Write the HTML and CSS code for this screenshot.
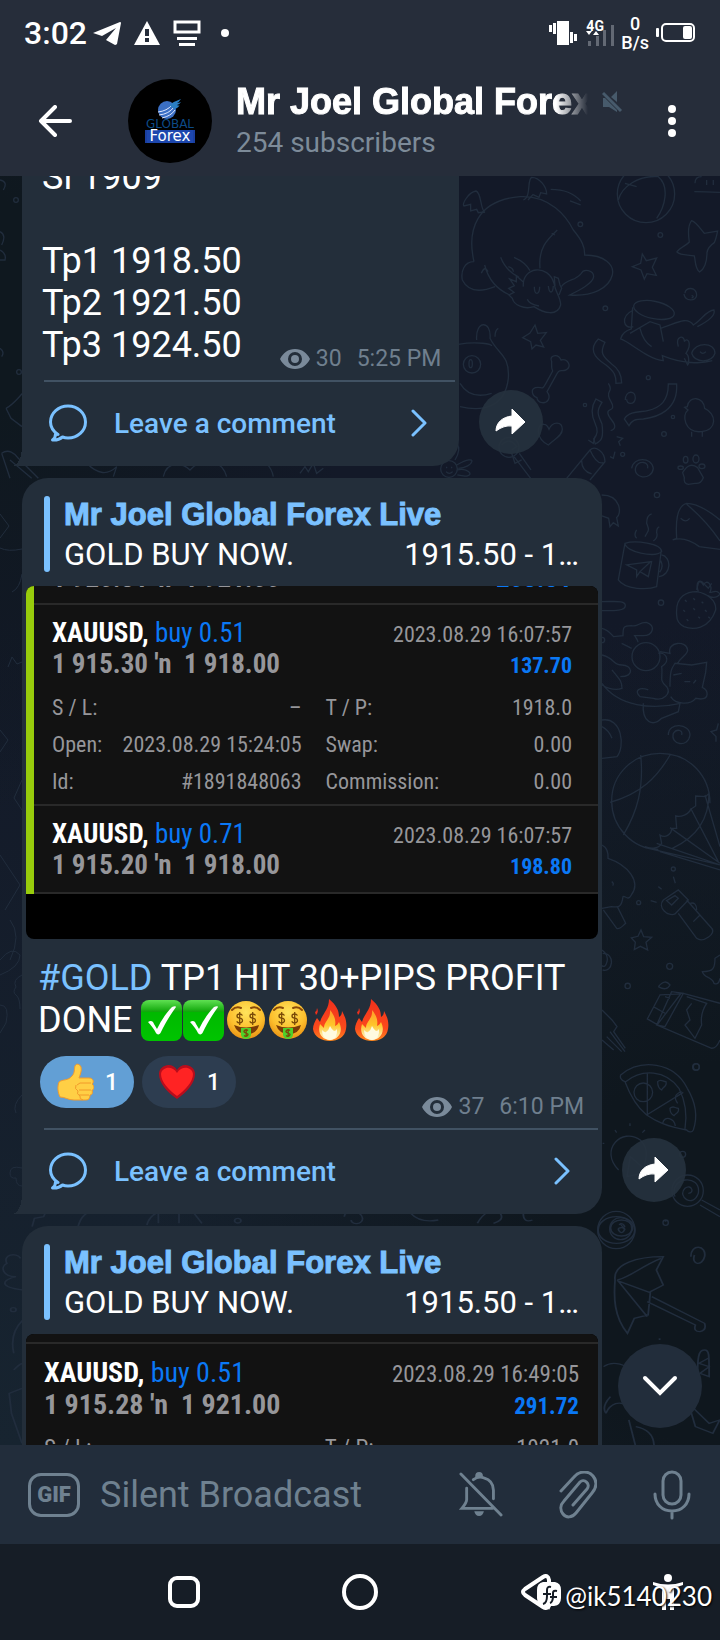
FILE: index.html
```
<!DOCTYPE html>
<html lang="en">
<head>
    <meta charset="UTF-8">
    <meta name="viewport" content="width=device-width, initial-scale=1.0">
    <title>Mr Joel Global Forex Live</title>
    <link rel="stylesheet" href="styles.css">
</head>
<body>
    <!-- Shared icons -->
    <svg class="sprite" width="0" height="0" aria-hidden="true">
        <defs>
            <linearGradient id="green" x1="0" y1="0" x2="0" y2="1">
                <stop offset="0" stop-color="#5fe052"/>
                <stop offset=".28" stop-color="#12a80c"/>
                <stop offset=".3" stop-color="#00b900"/>
                <stop offset="1" stop-color="#00c400"/>
            </linearGradient>
            <radialGradient id="gold" cx=".5" cy=".3" r=".75">
                <stop offset="0" stop-color="#ffe45c"/>
                <stop offset=".6" stop-color="#fdbf2d"/>
                <stop offset="1" stop-color="#e58a10"/>
            </radialGradient>
            <linearGradient id="flame" x1="0" y1="0" x2="0" y2="1">
                <stop offset="0" stop-color="#f0301c"/>
                <stop offset=".7" stop-color="#fb4a1c"/>
                <stop offset="1" stop-color="#ff8a1e"/>
            </linearGradient>
            <linearGradient id="flame-core" x1="0" y1="0" x2="0" y2="1">
                <stop offset="0" stop-color="#ff9a2a"/>
                <stop offset=".5" stop-color="#ffc52a"/>
                <stop offset="1" stop-color="#fffbd8"/>
            </linearGradient>
            <symbol id="check" viewBox="0 0 42 42">
                <rect x="0" y="1" width="41" height="41" rx="8" fill="url(#green)"/>
                <path d="M7 23c3-2 5-1 6 2l3 5C20 22 25 14 31 8c2-1 4-1 4 0-6 8-11 17-15 25-1 3-4 3-5 1-2-4-5-8-8-11z" fill="#fff"/>
            </symbol>
            <symbol id="money" viewBox="0 0 42 42">
                <circle cx="21" cy="21" r="19" fill="url(#gold)"/>
                <path d="M7 11q4-4 9-2M26 9q5-2 9 2" fill="none" stroke="#8a4b0a" stroke-width="2" stroke-linecap="round"/>
                <path d="M9 26q12 5 25 0-2 9-12 9T9 26z" fill="#7a3b06"/>
                <path d="M16 29h10v7q-1 4-5 4t-5-4z" fill="#4fd02a"/>
                <path d="M17.500 16.500q-1-1.500-3-1.500-2.500 0-2.500 2t2.700 2.200q2.800.4 2.800 2.400T14.700 24q-2 0-3-1.700M14.700 13v13M30.500 16.500q-1-1.500-3-1.500-2.500 0-2.500 2t2.700 2.200q2.800.4 2.800 2.400T27.700 24q-2 0-3-1.700M27.700 13v13M23 31.500q-2-1.500-3.500 0t1.500 2.500 1.500 2.500-3.500 0M21.200 30v8" fill="none" stroke="#7a4a08" stroke-width="1.300"/>
            </symbol>
            <symbol id="fire" viewBox="0 0 42 42">
                <path d="M20 0c7 6 10 11 10 18 2-1 3-3 3-6 4 7 5 12 4 18-1 8-8 12-16 12S5 38 4 30c0-4 2-8 4-11l3 4c2-8 9-12 9-23z" fill="url(#flame)"/>
                <path d="M6 13q2-1 2-4 2 4-1 7z" fill="#f0301c"/>
                <path d="M21 11c5 6 6 11 5 16 2-1 3-2 4-4 5 10-1 18-9 18S8 34 11 25l4 4c0-7 7-9 6-18z" fill="url(#flame-core)"/>
                <path d="M21 27q2 4 4 5 2 0 3-2 1 10-7 11-8-1-8-10 3 3 4 2 3-2 4-6z" fill="#fffbe0"/>
            </symbol>
            <symbol id="eye" viewBox="0 0 30 20">
                <path d="M15 0C8 0 3 4 0 10c3 6 8 10 15 10s12-4 15-10C27 4 22 0 15 0zm0 17a7 7 0 1 1 0-14 7 7 0 0 1 0 14z" fill="#7a8a9a"/>
                <circle cx="15" cy="10" r="4" fill="#7a8a9a"/>
            </symbol>
            <symbol id="bubble" viewBox="0 0 38 38">
                <path d="M9 30.500C4.500 27.500 1.500 23 1.500 18 1.500 9 9.500 2 19 2s17.500 7 17.500 16S28.500 34 19 34q-3 0-5.500-1Q9.500 36.500 3.500 36 7 33.500 6.500 28.500" fill="none" stroke="#7ac1ff" stroke-width="3" stroke-linejoin="round" stroke-linecap="round"/>
            </symbol>
            <symbol id="chevron" viewBox="0 0 16 28">
                <path d="M2 2l12 12L2 26" fill="none" stroke="#7ac1ff" stroke-width="3" stroke-linecap="round" stroke-linejoin="round"/>
            </symbol>
            <symbol id="share" viewBox="0 0 32 26">
                <path d="M17 0v7C7 8 1 14 1 22q8-6 16-5v8l13-12z" fill="#fff" stroke="#fff" stroke-linejoin="round"/>
            </symbol>
        </defs>
    </svg>

    <header class="top">
        <div class="status">
            <span class="clock">3:02</span>
            <svg width="28" height="24" viewBox="0 0 28 24"><path d="M0 12L27 1q1 0 1 1l-4 21q-1 1-2 1l-9-5 10-12L9 15z" fill="#fff"/></svg>
            <svg width="26" height="24" viewBox="0 0 26 24"><path d="M13 0l13 24H0z" fill="#fff"/><path d="M11 8h4v7h-4zM11 17h4v4h-4z" fill="#262d3a"/></svg>
            <svg width="28" height="26" viewBox="0 0 28 26"><path d="M2 2h24v10H2z" fill="none" stroke="#fff" stroke-width="3"/><path d="M4 17h20v3H4zM6 23h16v3H6z" fill="#fff"/></svg>
            <svg class="dot" width="8" height="8" viewBox="0 0 8 8"><circle cx="4" cy="4" r="4" fill="#fff"/></svg>
            <span class="spacer"></span>
            <svg width="28" height="24" viewBox="0 0 28 24"><path d="M8 0h12v24H8zM0 4h3v7H0zM4 2h3v11H4zM21 11h3v11h-3zM25 13h3v7h-3z" fill="#fff"/></svg>
            <div class="signal">
                <span class="net">4G</span>
                <svg width="28" height="28" viewBox="0 0 28 28"><path d="M2 22h3v5H2zM10 17h3v10h-3zM17 11h3v16h-3zM25 6h3v21h-3z" fill="#636974"/><path d="M0 12h6l-3 4zM7 16h6l-3-4z" fill="#fff"/></svg>
            </div>
            <div class="speed"><span>0</span><span>B/s</span></div>
            <svg width="40" height="20" viewBox="0 0 40 20"><rect x="6" y="1" width="32" height="17" rx="4" fill="none" stroke="#fff" stroke-width="2"/><rect x="27" y="3" width="9" height="13" rx="2" fill="#fff"/><rect x="0" y="5" width="3" height="9" rx="1" fill="#fff"/></svg>
        </div>
        <div class="channel">
            <button class="back" aria-label="Back">
                <svg width="34" height="32" viewBox="0 0 34 32"><path d="M17 2L3 16l14 14M3 16h29" fill="none" stroke="#fff" stroke-width="4" stroke-linecap="round" stroke-linejoin="round"/></svg>
            </button>
            <div class="avatar">
                <svg class="globe" width="26" height="20" viewBox="0 0 26 20"><circle cx="10" cy="11" r="9" fill="#3b6fc4"/><path d="M1 13q9-1 14-7M2 16q10-1 15-8M5 19q9-2 13-8" fill="none" stroke="#dfe8ff"/><path d="M12 6q6-4 12-6-2 3-4 4 2 0 4-1-2 3-4 3 2 1 3 0-3 4-6 4z" fill="#2b7fc4"/></svg>
                <span class="avatar-global">GLOBAL</span>
                <span class="avatar-forex">Forex</span>
            </div>
            <div class="info">
                <div class="name-row">
                    <h1>Mr Joel Global Forex Live</h1>
                    <svg width="22" height="24" viewBox="0 0 22 24"><path d="M9 7l6-6v11zM1 8h2l12 12v2L7 17H1z" fill="#475a6b"/><path d="M1 3l18 18" stroke="#475a6b" stroke-width="3"/></svg>
                </div>
                <p>254 subscribers</p>
            </div>
            <button class="menu" aria-label="More options">
                <svg width="8" height="34" viewBox="0 0 8 34"><g fill="#fff"><circle cx="4" cy="5" r="4"/><circle cx="4" cy="17" r="4"/><circle cx="4" cy="29" r="4"/></g></svg>
            </button>
        </div>
    </header>

    <main class="chat">
        <!-- Wallpaper doodles -->
        <svg class="doodles" width="720" height="1269" viewBox="0 176 720 1269" aria-hidden="true">
            <g transform="translate(440 170) scale(.3333)">
                <path d="M102 275C80 180 110 90 240 80c90-5 140 60 160 100 25 30 35 50 34 75 60 0 90 30 83 60-10 40-60 65-128 60 30-15 70-35 72-55 0-20-30-25-37-10-20 25-40 15-60 40M102 275c-30 0-40 30-35 55 20 40 60 35 98 20M134 285c10 40 30 70 75 90M300 295c-5-60 20-85 52-115M335 190l10 5M182 262q15 40 55 60M222 262q35 15 48 40M124 310q10-25 20-5M205 290q15 5 15 15"/>
                <path d="M250 350c-5-60 75-70 92-10 5 30 20 40 20 65-10 35-50 25-80 5-30 10-60-5-65-25l-10-10 15-8-16-12 17-8-14-20 20 8v-18l20 18M345 350l-2-30 12 5 5 20 5 10-8 20M283 350q0 20 8 20 8-2 8-20M325 348q2 18 8 18t7-18M262 388q5 15 35 20"/>
                <path d="M135 128c-15-10-10-60-27-65-25 5-42 40-36 45l20-5v20l18-5 5 10 18-2M250 90c25-10 10-60 25-68 25 0 45 30 45 50l-18-4-5 14-18-8-15 16M332 58q60 0 90 35M390 93l32 12"/>
                <circle cx="618" cy="72" r="86"/><path d="M535 90c10-40 60-75 120-70 35 30 20 90-5 125M555 40l35 10"/>
                <path d="M755 152c15 5 30 30 38 38l40-7c-5 25-5 25-10 35-15 10-20 18-22 30 0 30-10 50-22 58-15-10-12-35-16-48-15-5-40 0-52-12 10-15 30-20 37-30-3-20-5-50 7-64z"/><path d="M765 40q0-20 20-20M763 65q30 0 77 2M800 30v15M820 30v15"/>
                <path d="M607 252l12 20 31-8-13 28 12 24-28-5-8 16-10-27-26-10 25-10zM285 465l8 25 26-2-18 23 10 20-23-6-12 12-4-22-24-12 22-14z"/>
                <path d="M735 370c0-20 35-20 35 5 0 20-35 20-38-3M556 690c0-30 32-30 30-5-3 20-26 20-26 3M575 895c5-35 60-35 65 0-5 40-65 30-52-5 10-20 40-15 35 5M755 376q10 5 0 8"/>
                <ellipse cx="642" cy="420" rx="62" ry="26" transform="rotate(12 642 420)"/><path d="M580 420c-40 20-30 60 0 50M578 412l-4 65c-30 10-30 25-32 30 30 10 80 60 128 65l-3-15c60 25 120 25 150 15M570 490l60-35 30 10 10 50M600 475q10 40 35 55M660 475c40-10 80-40 100-10 25-15 40-45 62-45 5 15-10 30-50 50M715 530c-10-35 20-35 18-15 10-15 25 5 5 35 10 5 10 30 5 35l-10-20M755 550c10-35 70-35 70 0-10 30-60 30-70 0M780 545q8 10 18 0"/>
                <path d="M335 575c-10-20 20-25 28-5 20-5 35 20 15 30-20 5-20-5-32 20l-25 45c15 20 0 35-15 33-10 0-15-10-15-15-15-5-20-25-5-30 20-5 20 10 30-10l22-40c-5-10-3-20-3-28z"/>
                <path d="M475 507l20 10c-15 30-10 40 20 65q30 20 30 57l-17 1c0-25-5-35-30-55-40-25-50-50-23-78zM468 687l18 10c-20 30-10 40 0 65 5 40 0 50-20 60l-5-15c10-10 15-25 5-45q-20-40 2-75zM685 642h25c5 80-60 100-100 105-25 0-35 5-43 20l-14-20c15-25 50-20 70-25 40-10 62-30 62-80zM505 640q10 15 3 25t5 30-3 25 5 30-3 32"/>
                <path d="M325 825c-40-20-35-65-13-62 10 0 12 8 15 15 10-25 40-25 40 0 0 20-25 30-42 47zM55 523c60-10 100 0 100 5M110 510c-5-60 45-60 40-5 25 50 60 50 55 120-10 90-80 100-145 85M60 640q30 50 95 30M165 500q0-20 10-25"/>
                <circle cx="96" cy="583" r="26"/><ellipse cx="92" cy="581" rx="5" ry="12"/>
                <path d="M742 710c5-35 50-30 52 5 35 15 40 65-10 70-50 5-60-50-40-65l-10-8zM755 785v15M787 785v15M728 908q20-35 45-15l17 30q-8 20-25 17l-20 3q-15-2-12-20z"/><ellipse cx="768" cy="867" rx="9" ry="12"/><ellipse cx="737" cy="869" rx="7" ry="10"/><ellipse cx="786" cy="889" rx="9" ry="7"/><ellipse cx="722" cy="893" rx="8" ry="5"/>
                <path d="M380 925l70-85c15-15 45 5 45 35l-45 55M450 840q20 45 40 38M425 872q0 30 30 40M445 810l15 10 5-20M530 800l18 5-12 10 5 12M510 860l10 5 5-20"/><circle cx="207" cy="832" r="30"/><path d="M185 825q25-25 45 5l-15 10M222 860l50 65M238 850l35 50M215 850l10 30 20-10"/>
                <circle cx="27" cy="897" r="25"/><path d="M20 890v5M35 890v5M18 905q10 10 20 0M45 870c30-50-10-60 0-30M50 885c70-40 50 10 5 10M52 900c40-10 60 30 0 15"/>
                <path d="M485 975c60 0 60 60 45 68l5 25-15-10-10 12-4-25-20-7M555 1120l-20 110c20 30 90 30 115 20l14-110M555 1120c30-10 110 0 110 25-20 20-110 0-110-25zM665 1155c30 5 30 60-8 65M662 1172q10 20-3 35M560 1185l75-10-10 45-25-15-10 15v-20zM600 1205l30-28M590 1105q-10-10 0-25M615 1100c10-20 15-15 5-40 0-15 5-25 15-28M640 1113q15-10 10-25 0-15 8-17"/>
                <path d="M840 1050q-60-50-100-50c-40 10-30 90-30 105l-12 5c30-10 60 5 80 20l62 8M740 1003q60 50 100 110M722 1045q15 15 27 0M770 1260c5-20 5-30 15-25l20 20 10-15"/>
                <g><circle cx="421" cy="163" r="7"/><circle cx="661" cy="195" r="7"/><circle cx="496" cy="415" r="7"/><circle cx="625" cy="623" r="6"/><circle cx="435" cy="705" r="5"/><circle cx="699" cy="741" r="5"/><circle cx="672" cy="792" r="7"/><circle cx="548" cy="853" r="6"/><circle cx="651" cy="975" r="8"/></g>
            </g>
            <g transform="translate(590 560) scale(.3333)">
                <path d="M260 165c-5-60 35-70 60-70 30 5 60 25 57 55-20 60-70 60-95 50-20-10-22-25-22-35zM325 95c-10-30 5-40 15-20 10-20 30 0 20 22 10 0 20-10 30 5-10 15-30 10-35 5M285 120l5 5M310 115l5 5M335 125l5 5M280 150l5 5M310 145l5 5M345 150l5 5M290 178l5 5M325 170l5 5M355 170l5 5"/>
                <path d="M36 125c40 0 70-5 70 12s-40 15-70 15M36 205c20 5 30 20 35 25l28-3c0-25 0-30 25-30 20 5 20-10 45-10 30 10 20 40-10 40h-25q10 15 10 20M36 285c40 10 30 30 60 30 30 0 40 35-5 35M36 375q35 20 60 10c0-20-5-25-30-55M36 370c50 70 150 80 235 60M95 250l30 15"/><circle cx="168" cy="290" r="42"/><path d="M205 280c20-5 40 20 10 40 5 30-10 40 15 60 15 20-10 45-40 35l-40-5c-20-20 0-30 25-20M210 275l30 5c-10-35 50-40 53-10 0 15-20 20-30 40M240 380c0-50 5-55 15-70l50 5 45-8-3 30-10 45c20 10 20 35-5 35l-15-2c-15 20-60 20-75-5M160 430c-5 60 30 70 55 45l50-20 5-25M250 345l25-5M283 365h18M310 370l8-10"/>
                <path d="M235 525c0-40 65-35 65 0-5 40-60 30-50-5 10-15 30-10 25 5M36 480c60-10 70 80 45 110l-45 5M36 500q20 10 30 35M385 490l-5 20-17 5 15 15v15"/>
                <path d="M205 868c-80 0-140-70-140-145 0-80 65-143 145-143 90 0 150 70 150 150M152 585c10 100-10 170-52 240M242 582c-40 70-90 120-182 145M165 860c10 5 40 10 50-10l-5-25c15 10 35 0 35-20l15 0-3-37c15 5 40-5 45-20l15-10v-30l30 2 10-10c0 40-10 120-110 165M390 915L200 850M390 915l-225-52M390 910L240 803M385 905l-83-160M390 860l-45-155M390 930l-180-55"/>
                <path d="M36 855q20 10 18 40c60 20 100 70 70 110-10 20-20 0-25 5-5 40-20 30-35 30l-28 5M40 1050l40 55c10 5 20-10 27-15l-25-50M65 965q8 5 3 12"/>
                <path d="M220 1020l45-30 30 30-40 42c-20 10-55-20-35-42zM230 1022l25-15 10 8-20 20zM265 1060l55 75c20 15 60-15 45-30l-75-85M300 1030q20-5 20 20M330 1065l-20 20M250 950l6 20M205 980l10 8M182 1022l18 5"/>
                <path d="M153 1110l8 20 24 2-17 15 5 23-22-11-18 10 3-22-12-13 20-5zM390 1185l-15 10c0 30-5 40-38 40 5 20 30 15 35 35 10 5 15 0 18-15M36 1170q20 15 15 35t-15 12M36 1350l30 30 15 20-10 15 35 50M60 1415l45 60M50 1430l45 45M36 1440l35 30"/>
                <path d="M210 1305l-38 72 30 17 70-92zM190 1340l35 20M225 1310l15 5M245 1295l-45 100 25 5 55-100zM280 1300l110 30M200 1395l165 70q15 0 25-25M290 1310l60 20q-20 30-15 65l-20 40-30-40 15-15-10-30 15-20M205 1280q20-25 35-5-10 20-35 5"/>
                <g><circle cx="213" cy="128" r="8"/><circle cx="250" cy="927" r="6"/><circle cx="146" cy="1028" r="6"/><circle cx="239" cy="1219" r="9"/><circle cx="113" cy="1278" r="8"/><circle cx="319" cy="1521" r="9"/><circle cx="36" cy="240" r="8"/></g>
            </g>
            <g transform="translate(380 940) scale(.3333)">
                <path d="M722 405c60-50 160-40 200 40 30 50 30 90 18 125-5 10-15 5-20 0-60-10-90-25-120-45-30-25-50-60-65-100-15-5-15-15-13-20zM737 425c50-40 120-35 160 20 20 40 25 80 18 122M802 398v127M800 525l110-68"/><circle cx="790" cy="457" r="28"/><path d="M848 550c5-25 35-15 38 8M833 425c10-10 15 0 25 0 5 15-10 15-13 25-10-5-12-15-12-25zM870 505c10-10 15 0 25 0 5 15-10 15-13 22-10-5-12-12-12-22zM905 455q-30 10-12 35"/>
                <path d="M716 690c-60-60 10-130 65-90 30 30 15 60 10 85l-40-35-10 60 45-10M750 550v8M705 570l5 8M795 570l-8 8M668 610h5"/><circle cx="923" cy="752" r="47"/><path d="M885 770c-20-60 80-70 70-10-15 45-65 10-40-15 20-15 30 15 10 15M965 780l55 30M960 795l60 35"/><circle cx="709" cy="870" r="56"/><circle cx="722" cy="866" r="33"/><path d="M668 40c40 0 30 60 0 50M720 850l15 20"/>
                <circle cx="908" cy="643" r="9"/><circle cx="948" cy="381" r="10"/><circle cx="857" cy="848" r="8"/>
            </g>
            <g transform="translate(0 1210) scale(.459 .3333)">
                <path d="M1340 210c-5-50 50-70 105-70l-15 40 15 45-28 20-5 70-30 10-15 45c-30-50-30-110-27-160zM1345 212l70 35M1345 210l65 110M1345 210c30-10 50-40 95-65M1420 260l115 80q5 20-10 25-15 0-10-20L1410 275M1505 140c0-40 35-35 30 0-5 30-30 25-22-5"/>
                <circle cx="1343" cy="60" r="40"/><circle cx="1354" cy="54" r="24"/><path d="M1349 45q5-8 10 0t-5 8-5 10 10 0-5-10M1520 480c0-50 5-60 15-60s10 10 10 80l-20-10 20-20-22-10 20-15M1315 470q20-20 50 0M1320 610c10-30 30-40 50-20M1370 630l15 80M1500 580l45 60 23-10-15 40-38-20zM1385 650q40 10 40 60M1330 560q-20 30-10 50"/>
                <path d="M45 145c-10-20-40-10-30 15-15 10-10 40 20 40-30 10-40 30 15 40M50 330q-30 40-20 100M48 535l-28 15 5 60 23 90M30 480q10-15 18-20M1450 30v5M1437 385v5"/>
                <path d="M70 50l5-25 20-5 5-15M170 50q10-50 40-45M320 45q10-50 60-40h80M345 10v30M390 10v30M420 5l20 35M750 20c0-20 35-25 40 5 0 20-25 20-25 5M895 10q20 30 60 20M1040 40q20-50 50-30 10 20-15 30M1140 10q0 30 20 20"/>
                <circle cx="518" cy="32" r="7"/><circle cx="29" cy="299" r="6"/>
            </g>
            <g transform="translate(0 170) scale(.3333)">
                <path d="M0 30q25 5 10 30M0 185q20 10 5 40M0 240q20 10 15 30H0M0 535q15 10 5 25M18 715c20-10 35-30 50-45M18 715l15 30 33 25M5 850c20-15 40 0 50 15l60 60M5 850l25 75M30 870l65 55M490 920c10-50 60-40 80-20 50-50 100-20 110 20M740 860q70 5 80 60M900 910l15-20 10 15 15-25 10 30 20-15M260 880q50 50 90 10l-10 30"/>
                <circle cx="48" cy="90" r="7"/><circle cx="57" cy="606" r="7"/>
            </g>
            <path d="M0 514l9 12-9 12M0 548q8 4 22 1M12 592q8-4 10-18M8 667l4-10 5 7 5-2M0 730l8 10-8 12M22 780l-8 18 8 12M0 855l20 30-15 25M10 920q12 15 0 40M0 960q12-15 20-5 0 12-20 20M22 975q-10 5-6 12-4 5 0 8t4 14M0 1005q10 0 6 18l-6 10M22 1095q-10 10-6 18M22 1168q-12-3-12 5 0 6 6 5 0 8 6 8"/>
        </svg>

        <article class="row">
            <div class="message message-first">
                <div class="text-row">
                    <p class="text">Sl 1909<br><br>Tp1 1918.50<br>Tp2 1921.50<br>Tp3 1924.50</p>
                    <div class="meta">
                        <svg width="30" height="20"><use href="#eye"/></svg>
                        <span>30</span>
                        <time>5:25 PM</time>
                    </div>
                </div>
                <button class="comment">
                    <svg width="38" height="38"><use href="#bubble"/></svg>
                    <span>Leave a comment</span>
                    <svg width="16" height="28"><use href="#chevron"/></svg>
                </button>
            </div>
            <button class="share" aria-label="Share"><svg width="32" height="26"><use href="#share"/></svg></button>
        </article>

        <article class="row">
            <div class="message message-wide">
                <blockquote class="reply">
                    <strong>Mr Joel Global Forex Live</strong>
                    <p><span>GOLD BUY NOW.</span><span>1915.50 - 1…</span></p>
                </blockquote>
                <div class="photo">
                    <div class="trades">
                        <div class="cut"><span>1 920.31 ′n&nbsp; 1 921.00</span><span class="profit">203.31</span></div>
                        <section class="trade">
                            <div class="line"><span><b>XAUUSD,</b> <span class="side">buy 0.51</span></span><time>2023.08.29 16:07:57</time></div>
                            <div class="line price"><span>1 915.30 ′n&nbsp; 1 918.00</span><span class="profit">137.70</span></div>
                            <table>
                                <tr><td>S / L:</td><td>–</td><td>T / P:</td><td>1918.0</td></tr>
                                <tr><td>Open:</td><td>2023.08.29 15:24:05</td><td>Swap:</td><td>0.00</td></tr>
                                <tr><td>Id:</td><td>#1891848063</td><td>Commission:</td><td>0.00</td></tr>
                            </table>
                        </section>
                        <section class="trade trade-last">
                            <div class="line"><span><b>XAUUSD,</b> <span class="side">buy 0.71</span></span><time>2023.08.29 16:07:57</time></div>
                            <div class="line price"><span>1 915.20 ′n&nbsp; 1 918.00</span><span class="profit">198.80</span></div>
                        </section>
                    </div>
                </div>
                <p class="text caption"><a href="#gold">#GOLD</a> TP1 HIT 30+PIPS PROFIT DONE <svg class="emoji" role="img" aria-label="Check mark"><use href="#check"/></svg><svg class="emoji" role="img" aria-label="Check mark"><use href="#check"/></svg><svg class="emoji" role="img" aria-label="Money face"><use href="#money"/></svg><svg class="emoji" role="img" aria-label="Money face"><use href="#money"/></svg><svg class="emoji" role="img" aria-label="Fire"><use href="#fire"/></svg><svg class="emoji" role="img" aria-label="Fire"><use href="#fire"/></svg></p>
                <div class="bottom-row">
                    <div class="reactions">
                        <button class="reaction chosen" aria-label="Thumbs up, 1">
                            <svg width="38" height="38" viewBox="0 0 38 38"><path d="M3 19c4-3 9-1 13-6 3-3 2-7 3-10 1-3 5-2 6 1 1 4-1 8-2 11h10c5 0 5 5 3 6 3 2 2 6 0 6 1 3 0 5-2 5 0 3-1 5-4 5H18c-6 0-9-3-14-3-2-4-3-10-1-15z" fill="#ffcf45" stroke="#f29a2b" stroke-width="1"/><path d="M21 22q2-3 8-2h6M23 27h12M23 32h10M20 22q-2 4 2 6-2 3 2 5-1 3 3 4" fill="none" stroke="#f29a2b" stroke-width="1"/></svg>
                            <span>1</span>
                        </button>
                        <button class="reaction" aria-label="Heart, 1">
                            <svg width="38" height="38" viewBox="0 0 38 38"><path d="M19 36C9 29 1 20 1 11 1 2 14-2 19 7c5-9 18-5 18 4 0 9-8 18-18 25z" fill="#b80d1c"/><path d="M19 33C11 27 3 19 3 11 4 4 14 2 19 10c5-8 15-6 16 1 0 8-8 16-16 22z" fill="#ff2323"/></svg>
                            <span>1</span>
                        </button>
                    </div>
                    <div class="meta">
                        <svg width="30" height="20"><use href="#eye"/></svg>
                        <span>37</span>
                        <time>6:10 PM</time>
                    </div>
                </div>
                <button class="comment">
                    <svg width="38" height="38"><use href="#bubble"/></svg>
                    <span>Leave a comment</span>
                    <svg width="16" height="28"><use href="#chevron"/></svg>
                </button>
            </div>
            <button class="share" aria-label="Share"><svg width="32" height="26"><use href="#share"/></svg></button>
        </article>

        <article class="row row-cut">
            <div class="message message-wide">
                <blockquote class="reply">
                    <strong>Mr Joel Global Forex Live</strong>
                    <p><span>GOLD BUY NOW.</span><span>1915.50 - 1…</span></p>
                </blockquote>
                <div class="photo photo-zoomed">
                    <div class="trades">
                        <div class="cut"></div>
                        <section class="trade">
                            <div class="line"><span><b>XAUUSD,</b> <span class="side">buy 0.51</span></span><time>2023.08.29 16:49:05</time></div>
                            <div class="line price"><span>1 915.28 ′n&nbsp; 1 921.00</span><span class="profit">291.72</span></div>
                            <table>
                                <tr><td>S / L:</td><td>–</td><td>T / P:</td><td>1921.0</td></tr>
                            </table>
                        </section>
                    </div>
                </div>
            </div>
        </article>

        <button class="scroll-down" aria-label="Scroll to bottom">
            <svg width="36" height="22" viewBox="0 0 36 22"><path d="M3 3l15 15L33 3" fill="none" stroke="#fff" stroke-width="4" stroke-linecap="round"/></svg>
        </button>
    </main>

    <form class="compose">
        <button type="button" class="gif" aria-label="Send a GIF">GIF</button>
        <input type="text" placeholder="Silent Broadcast" aria-label="Silent Broadcast">
        <button type="button" aria-label="Notifications off">
            <svg width="44" height="46" viewBox="0 0 46 48"><g fill="none" stroke="#6f8190" stroke-width="3"><path d="M8 17v12q0 3-5 9h32M15 8q5-4 11-2c7 2 10 7 10 13v9M2 2l42 43" stroke-linecap="round"/></g><path d="M17 4a4 4 0 0 1 8 0v2h-8zM16 41h10q-1 5-5 5t-5-5z" fill="#6f8190"/></svg>
        </button>
        <button type="button" aria-label="Attach">
            <svg width="38" height="48" viewBox="2 0 38 48"><path d="M4 20L17 6c6-7 15-6 19-1 4 5 4 11-1 17L19 42c-4 5-10 5-13 1s-3-9 1-13l16-19c4-4 11 2 7 7L16 34" fill="none" stroke="#6f8190" stroke-width="3" stroke-linecap="round"/></svg>
        </button>
        <button type="button" aria-label="Record voice">
            <svg width="38" height="50" viewBox="0 0 38 50"><g fill="none" stroke="#6f8190" stroke-width="3" stroke-linecap="round"><rect x="10" y="2" width="18" height="32" rx="9"/><path d="M2 24c0 10 7 17 17 17s17-7 17-17M19 41v7"/></g></svg>
        </button>
    </form>

    <nav class="system">
        <button aria-label="Recent apps"><svg width="36" height="36" viewBox="0 0 36 36"><rect x="4" y="4" width="28" height="28" rx="7" fill="none" stroke="#fff" stroke-width="4"/></svg></button>
        <button aria-label="Home"><svg width="36" height="36" viewBox="0 0 36 36"><circle cx="18" cy="18" r="16" fill="none" stroke="#fff" stroke-width="4"/></svg></button>
        <button aria-label="Back"><svg width="36" height="36" viewBox="0 0 36 36"><path d="M7 15L25 3q5-3 6 3v24q-1 6-6 3L7 21q-4-3 0-6z" fill="none" stroke="#fff" stroke-width="4"/></svg></button>
        <button class="access" aria-label="Accessibility"><svg width="32" height="38" viewBox="0 0 32 38"><circle cx="16" cy="5" r="4" fill="#fff"/><path d="M1 9q15 5 30 0v3l-9 3v22h-4V26h-4v11h-4V15l-9-3z" fill="#fff"/></svg></button>
        <div class="watermark">
            <svg width="26" height="30" viewBox="0 0 26 30"><path d="M7 1h12q6 1 6 8v8q0 7-7 8h-3l-2 4-2-4H8q-7-1-7-8V9q0-7 6-8z" fill="#fff"/><path d="M7 23q4-1 4-8V9q0-4 4-3M7 13h8M14 22q3-1 3-7v-3q0-3 4-2M14 16h7" fill="none" stroke="#161d26" stroke-width="2"/></svg>
            <span>@ik5140230</span>
        </div>
    </nav>
</body>
</html>
```
FILE: styles.css
```
* {
    box-sizing: border-box;
}
body {
    margin: 0;
    height: 100vh;
    display: flex;
    flex-direction: column;
    background: #161d26;
    color: #fff;
    font-family: Roboto, sans-serif;
    overflow: hidden;
}
h1, p, blockquote {
    margin: 0;
}
button {
    padding: 0;
    border: none;
    background: none;
    color: inherit;
    font-family: inherit;
    cursor: pointer;
}
svg {
    display: block;
    flex-shrink: 0;
}
.sprite {
    position: absolute;
}

/* Status bar and channel header */
.top {
    background: #262d3a;
    flex-shrink: 0;
}
.status {
    height: 66px;
    padding: 0 24px;
    display: flex;
    align-items: center;
    gap: 6px;
}
.status > svg + svg {
    margin-left: 7px;
}
.status > .dot {
    margin: 0 14px;
}
.clock {
    font-size: 32px;
    font-weight: 500;
    line-height: 36px;
}
.spacer {
    flex: 1;
}
.signal {
    display: grid;
    margin-left: 3px;
}
.signal > * {
    grid-area: 1 / 1;
}
.net {
    font-size: 14px;
    line-height: 14px;
    font-weight: bold;
}
.speed {
    display: flex;
    flex-direction: column;
    align-items: center;
    margin: 0 1px;
    font-size: 18px;
    font-weight: 500;
    line-height: 19px;
}
.channel {
    height: 110px;
    padding: 0 24px 0 38px;
    display: flex;
    align-items: center;
}
.avatar {
    width: 84px;
    height: 84px;
    margin: 0 24px 0 56px;
    border-radius: 50%;
    background: #000;
    display: flex;
    flex-direction: column;
    align-items: center;
    justify-content: center;
    flex-shrink: 0;
}
.avatar-global {
    font: 12px/11px "DejaVu Sans", sans-serif;
    color: #0c4a86;
}
.avatar-forex {
    padding: 0 3px;
    border: solid #1a3fa0;
    border-width: 0 2px;
    background: #1d47ae;
    font: 15px/13px "DejaVu Sans", sans-serif;
}
.info {
    flex: 1;
    min-width: 0;
    margin-right: 24px;
}
.name-row {
    display: flex;
    align-items: center;
    gap: 14px;
}
h1 {
    font: bold 36px/42px "Liberation Sans", sans-serif;
    -webkit-text-stroke: 1px #fff;
    white-space: nowrap;
    overflow: hidden;
    -webkit-mask-image: linear-gradient(to left, transparent, #000 32px);
    mask-image: linear-gradient(to left, transparent, #000 32px);
}
.info p {
    margin-top: 2px;
    font-size: 28px;
    line-height: 36px;
    color: #7d8b99;
}
.menu {
    width: 48px;
    display: flex;
    justify-content: center;
}

/* Messages */
.chat {
    flex: 1;
    min-height: 0;
    position: relative;
    display: flex;
    flex-direction: column;
    gap: 12px;
    overflow: hidden;
    background: radial-gradient(ellipse 80% 50% at 100% 85%, #0f171e 30%, rgba(15, 23, 30, 0)),
        radial-gradient(ellipse 50% 40% at 0 10%, #0f181f 20%, rgba(15, 24, 31, 0)),
        linear-gradient(to bottom, #131928 35%, #172430);
}
.doodles {
    position: absolute;
    top: 0;
    right: 0;
    fill: none;
    stroke: #212d3d;
    stroke-width: 1;
}
.doodles g {
    stroke-width: 4;
}
.row {
    position: relative;
    display: flex;
    align-items: flex-end;
    gap: 20px;
    padding: 0 34px 0 22px;
    flex-shrink: 0;
}
.row-cut {
    padding-right: 118px;
}
.row:first-of-type {
    margin-top: -20px;
}
.message {
    position: relative;
    border-radius: 26px 26px 26px 0;
    background: #232e3a;
}
.message::before {
    content: "";
    position: absolute;
    left: -10px;
    bottom: 0;
    width: 10px;
    height: 20px;
    background: radial-gradient(ellipse 10px 20px at 0 0, transparent 100%, #232e3a);
}
.message-wide {
    flex: 1;
    min-width: 0;
}
.message-first {
    border-top-right-radius: 0;
    border-top-left-radius: 0;
}
.text {
    font-size: 36px;
    line-height: 42px;
}
.text-row {
    display: flex;
    align-items: flex-end;
    gap: 38px;
    padding: 0 18px 7px 20px;
}
.text-row .text {
    margin-bottom: 7px;
}
.meta {
    display: flex;
    align-items: center;
    gap: 6px;
    font-size: 23px;
    line-height: 28px;
    color: #6f7f8e;
}
.meta time {
    margin-left: 9px;
}
.comment {
    display: flex;
    align-items: center;
    width: calc(100% - 26px);
    height: 86px;
    margin: 0 4px 0 22px;
    padding: 0 28px 2px 5px;
    border-top: 2px solid #415263;
    color: #7ac1ff;
    font-size: 28px;
    font-weight: 500;
    text-align: left;
}
.comment span {
    flex: 1;
    margin-left: 27px;
}
.share {
    width: 64px;
    height: 64px;
    margin-bottom: 12px;
    border-radius: 50%;
    background: rgba(38, 50, 62, 0.9);
    display: flex;
    align-items: center;
    justify-content: center;
    flex-shrink: 0;
}
.reply {
    display: flex;
    flex-direction: column;
    gap: 4px;
    padding: 18px 23px 14px 22px;
    position: relative;
}
.reply::before {
    content: "";
    position: absolute;
    top: 18px;
    bottom: 14px;
    width: 6px;
    border-radius: 3px;
    background: #7ac1ff;
}
.reply strong {
    margin-left: 20px;
    font: bold 31px/38px "Liberation Sans", sans-serif;
    color: #7ac1ff;
    -webkit-text-stroke: 1px #7ac1ff;
}
.reply p {
    display: flex;
    justify-content: space-between;
    margin-left: 20px;
    font-size: 31px;
    line-height: 34px;
}

/* Trading history photos */
.photo {
    margin: 0 4px;
    padding-bottom: 45px;
    border-radius: 8px;
    background: #000;
    overflow: hidden;
    font-family: "Roboto Condensed", "Liberation Sans Narrow", Roboto, sans-serif;
    font-size: 22px;
    color: #96969a;
}
.trades {
    border-left: 8px solid #98cc0c;
    background: #121212;
}
.cut {
    height: 17px;
    padding: 0 26px 11px 18px;
    display: flex;
    justify-content: space-between;
    align-items: flex-end;
    font-size: 27px;
    line-height: 28px;
    font-weight: bold;
}
.trade {
    padding: 14px 26px 4px 18px;
    border-top: 2px solid #292929;
}
.trade-last {
    padding-bottom: 10px;
    border-bottom: 2px solid #292929;
}
.line {
    display: flex;
    justify-content: space-between;
    align-items: baseline;
    line-height: 29px;
}
.line > span:first-child {
    font-size: 27px;
}
.line b {
    color: #fff;
}
.side {
    color: #0a78f5;
}
.price {
    font-weight: bold;
    line-height: 30px;
}
.line .profit, .cut .profit {
    color: #0a78f5;
}
.photo table {
    width: 100%;
    margin-top: 8px;
    border-collapse: collapse;
    table-layout: fixed;
}
.photo td {
    padding: 0;
    height: 37px;
    line-height: 37px;
    white-space: nowrap;
}
.photo td:nth-child(1) {
    width: 12%;
}
.photo td:nth-child(2) {
    width: 36%;
}
.photo td:nth-child(3) {
    width: 30%;
    padding-left: 24px;
}
.photo td:nth-child(even) {
    text-align: right;
}
.photo-zoomed {
    font-size: 23px;
}
.photo-zoomed .trades {
    border-left: none;
}
.photo-zoomed .cut {
    height: 8px;
    padding-bottom: 0;
}
.photo-zoomed .trade {
    padding-right: 19px;
}
.photo-zoomed .line {
    line-height: 30px;
}
.photo-zoomed .line > span:first-child {
    font-size: 28px;
}

/* Caption and reactions */
.caption {
    padding: 18px 16px 15px;
}
.caption a {
    color: #7ac1ff;
    text-decoration: none;
}
.emoji {
    display: inline-block;
    width: 42px;
    height: 42px;
    vertical-align: -9px;
}
.bottom-row {
    display: flex;
    justify-content: space-between;
    align-items: flex-end;
    padding: 0 18px 7px;
}
.reactions {
    display: flex;
    gap: 8px;
    margin-bottom: 13px;
}
.reaction {
    width: 94px;
    height: 52px;
    border-radius: 26px;
    background: #2d3d50;
    display: flex;
    align-items: center;
    justify-content: center;
    gap: 11px;
    font-size: 23px;
    font-weight: 500;
}
.chosen {
    background: #629fd5;
}
.scroll-down {
    position: absolute;
    right: 18px;
    bottom: 17px;
    width: 84px;
    height: 84px;
    border-radius: 50%;
    background: #222d3b;
    display: flex;
    align-items: center;
    justify-content: center;
}

/* Message box and system buttons */
.compose {
    height: 99px;
    flex-shrink: 0;
    display: flex;
    align-items: center;
    padding: 0 29px 0 28px;
    background: #222d3b;
}
.compose button + button {
    margin-left: 56px;
}
.compose .gif {
    width: 52px;
    height: 44px;
    border: 3px solid #6f8190;
    border-radius: 13px;
    color: #6f8190;
    font-size: 22px;
    font-weight: 900;
}
.compose input {
    flex: 1;
    min-width: 0;
    margin-left: 20px;
    padding: 0;
    border: none;
    outline: none;
    background: none;
    color: #fff;
    font-family: inherit;
    font-size: 36px;
}
.compose input::placeholder {
    color: #6f8190;
    opacity: 1;
}
.system {
    position: relative;
    height: 96px;
    flex-shrink: 0;
    display: flex;
    align-items: center;
    gap: 140px;
    padding: 0 36px 0 166px;
    background: #161d26;
}
.system .access {
    margin-left: -42px;
}
.watermark {
    position: absolute;
    right: 8px;
    bottom: 28px;
    display: flex;
    align-items: center;
    gap: 3px;
    font: 26px/32px Lato, sans-serif;
    text-shadow: 1px 1px 2px #000;
}
```
